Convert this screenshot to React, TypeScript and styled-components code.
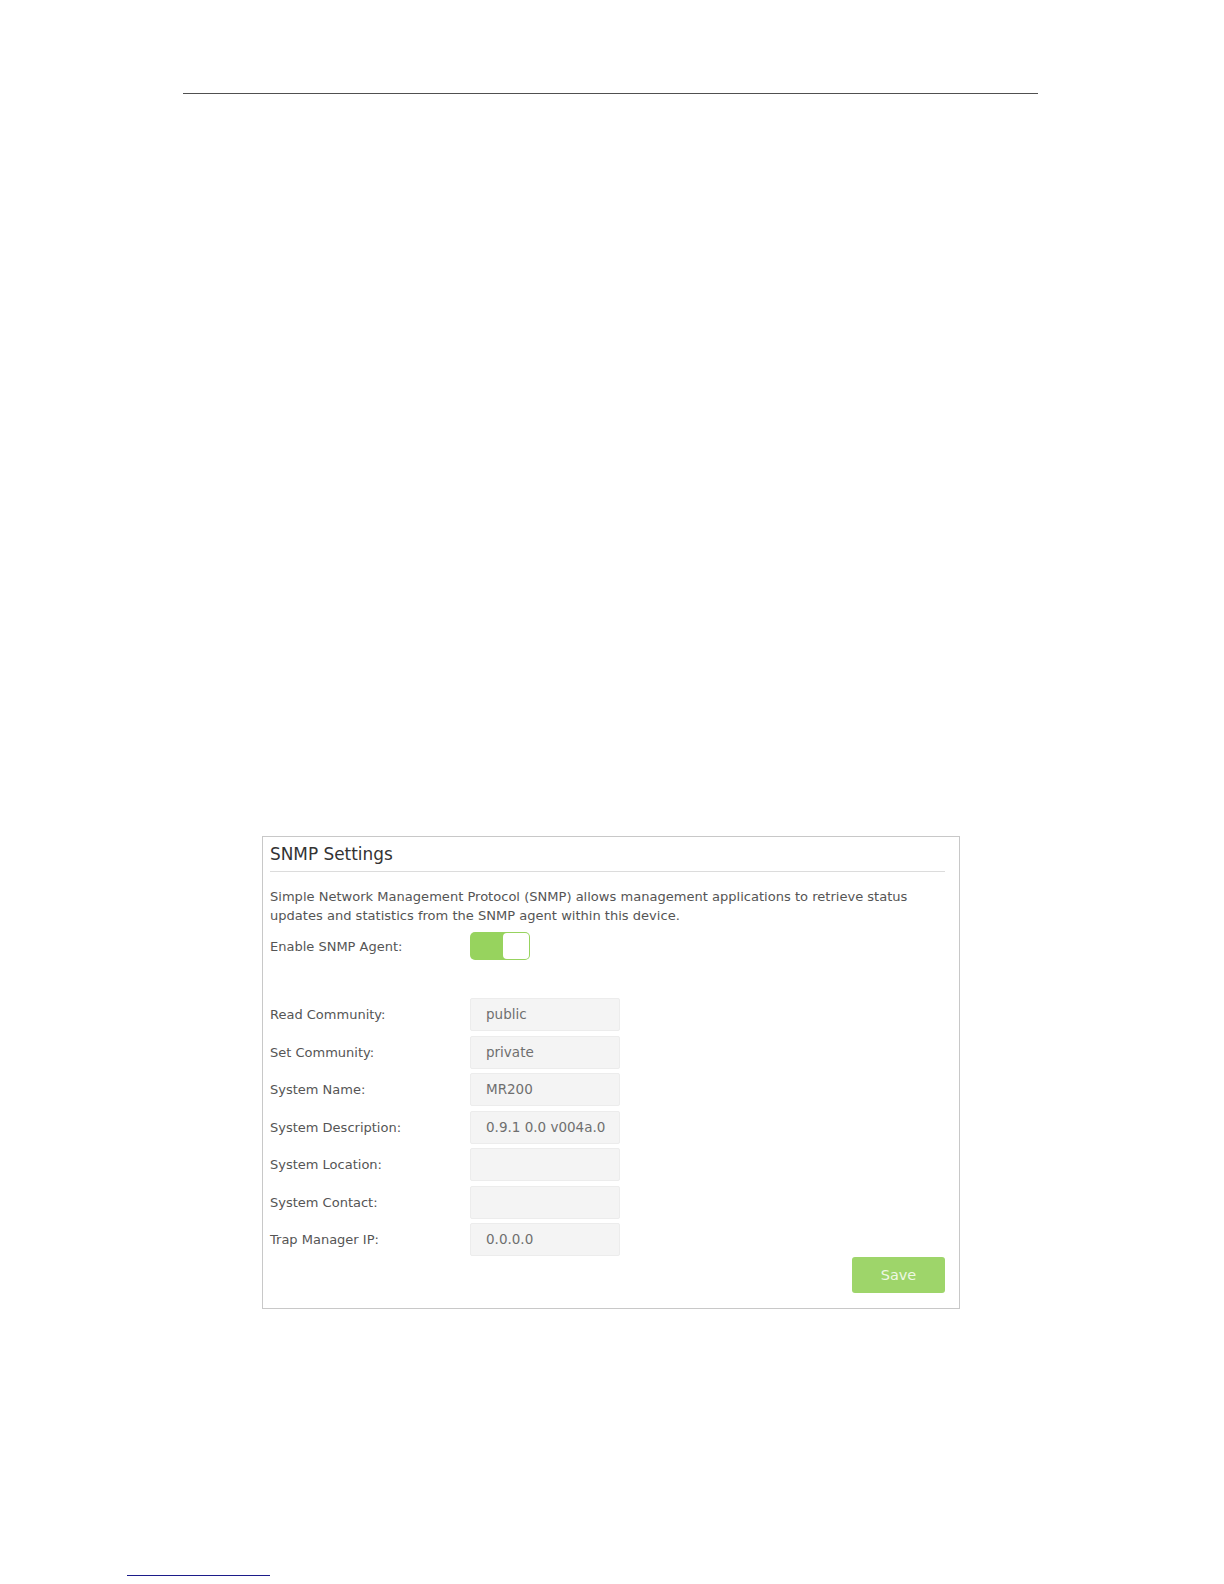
import styled, { createGlobalStyle } from 'styled-components';

const GlobalStyle = createGlobalStyle`
  html, body {
    margin: 0;
    padding: 0;
    background: #fff;
  }
  body {
    font-family: "DejaVu Sans", Verdana, sans-serif;
  }
`;

const Page = styled.div`
  width: 1224px;
  height: 1584px;
  padding-top: 93px;
  box-sizing: border-box;
  position: relative;
`;

const HeaderRule = styled.div`
  margin: 0 186px 0 183px;
  border-top: 1.5px solid #505050;
`;

const Card = styled.section`
  margin: 742px 0 0 262px;
  width: 698px;
  height: 473px;
  box-sizing: border-box;
  border: 1px solid #c8c8c8;
  padding: 0 14px 0 7px;
  color: #555;
  font-size: 13px;
`;

const Title = styled.h2`
  margin: 0;
  padding: 4px 0 4px;
  line-height: 26px;
  font-size: 16.9px;
  font-weight: normal;
  color: #333;
  border-bottom: 1px solid #dcdcdc;
`;

const Description = styled.p`
  margin: 15px 0 0;
  line-height: 19px;
  font-size: 13.05px;
  white-space: nowrap;
`;

const Row = styled.div<{ $gap?: number }>`
  display: flex;
  align-items: center;
  margin-top: ${(p) => p.$gap ?? 4.5}px;
`;

const Label = styled.label`
  width: 200px;
  flex: none;
`;

const Field = styled.div`
  width: 150px;
  height: 33px;
  box-sizing: border-box;
  background: #f4f4f4;
  border: 1px solid #ececec;
  border-radius: 2px;
  padding-left: 15px;
  line-height: 31px;
  color: #6f6f6f;
  font-size: 13.5px;
`;

const Toggle = styled.div`
  width: 60px;
  height: 28px;
  box-sizing: border-box;
  border-radius: 5px;
  background: #97d35e;
  display: flex;
  justify-content: flex-end;
  padding: 1px;
`;

const Knob = styled.div`
  width: 26px;
  height: 26px;
  border-radius: 4px;
  background: #fff;
`;

const Actions = styled.div`
  display: flex;
  justify-content: flex-end;
  margin-top: 1px;
`;

const SaveButton = styled.button`
  width: 93px;
  height: 36px;
  border: none;
  border-radius: 3px;
  background: #9ed56a;
  color: #eef8e4;
  font-family: "DejaVu Sans", Verdana, sans-serif;
  font-size: 14.5px;
  cursor: pointer;
`;

const FooterRule = styled.div`
  position: absolute;
  left: 127px;
  top: 1575px;
  width: 143px;
  border-top: 1.5px solid #1c1c8a;
`;

const fields = [
  { label: 'Read Community:', value: 'public' },
  { label: 'Set Community:', value: 'private' },
  { label: 'System Name:', value: 'MR200' },
  { label: 'System Description:', value: '0.9.1 0.0 v004a.0' },
  { label: 'System Location:', value: '' },
  { label: 'System Contact:', value: '' },
  { label: 'Trap Manager IP:', value: '0.0.0.0' },
];

function App() {
  return (
    <>
      <GlobalStyle />
      <Page>
        <HeaderRule />
        <Card>
          <Title>SNMP Settings</Title>
          <Description>
            Simple Network Management Protocol (SNMP) allows management applications to retrieve status
            <br />
            updates and statistics from the SNMP agent within this device.
          </Description>
          <Row $gap={7}>
            <Label>Enable SNMP Agent:</Label>
            <Toggle>
              <Knob />
            </Toggle>
          </Row>
          {fields.map((f, i) => (
            <Row key={f.label} $gap={i === 0 ? 38 : undefined}>
              <Label>{f.label}</Label>
              <Field>{f.value}</Field>
            </Row>
          ))}
          <Actions>
            <SaveButton type="button">Save</SaveButton>
          </Actions>
        </Card>
        <FooterRule />
      </Page>
    </>
  );
}

export default App;
